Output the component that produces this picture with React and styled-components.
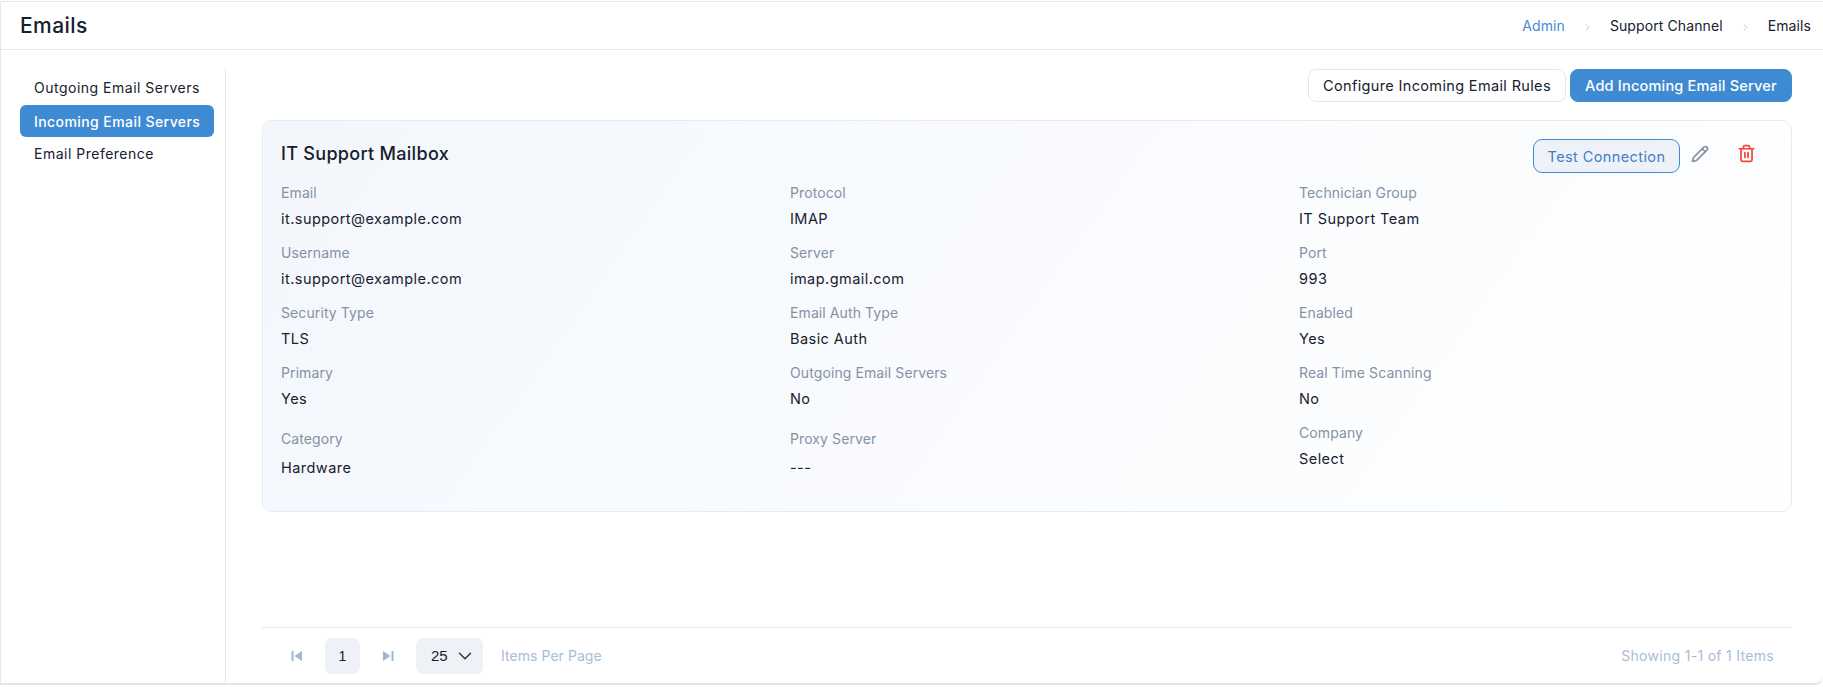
import React from 'react';
import styled, { createGlobalStyle } from 'styled-components';
import { ChevronDown, ChevronRight, Pencil, Trash2 } from 'lucide-react';

const GlobalStyle = createGlobalStyle`
	html, body {
		margin: 0;
		padding: 0;
		background: #fff;
		font-family: Inter, 'Liberation Sans', sans-serif;
		color: #16202e;
	}
	* {
		box-sizing: border-box;
	}
`;

const fields = [
	{ label: 'Email', value: 'it.support@example.com' },
	{ label: 'Protocol', value: 'IMAP' },
	{ label: 'Technician Group', value: 'IT Support Team' },
	{ label: 'Username', value: 'it.support@example.com' },
	{ label: 'Server', value: 'imap.gmail.com' },
	{ label: 'Port', value: '993' },
	{ label: 'Security Type', value: 'TLS' },
	{ label: 'Email Auth Type', value: 'Basic Auth' },
	{ label: 'Enabled', value: 'Yes' },
	{ label: 'Primary', value: 'Yes' },
	{ label: 'Outgoing Email Servers', value: 'No' },
	{ label: 'Real Time Scanning', value: 'No' },
];

const SkipIcon = ({ flip }) => (
	<SkipSvg viewBox="0 0 12 12" $flip={flip}>
		<rect x="0.5" y="1" width="2" height="10" />
		<path d="M11 1v10L3.5 6z" />
	</SkipSvg>
);

const App = () => (
	<>
		<GlobalStyle />
		<Shell>
			<Header>
				<PageTitle>Emails</PageTitle>
				<Breadcrumb>
					<Crumb $link>Admin</Crumb>
					<CrumbArrow>
						<ChevronRight size={11} strokeWidth={1.6} color="#a9b8cc" />
					</CrumbArrow>
					<Crumb>Support Channel</Crumb>
					<CrumbArrow>
						<ChevronRight size={11} strokeWidth={1.6} color="#a9b8cc" />
					</CrumbArrow>
					<Crumb>Emails</Crumb>
				</Breadcrumb>
			</Header>
			<Body>
				<Sidebar>
					<NavItem>Outgoing Email Servers</NavItem>
					<NavItem $active>Incoming Email Servers</NavItem>
					<NavItem>Email Preference</NavItem>
				</Sidebar>
				<Main>
					<Toolbar>
						<OutlineButton>Configure Incoming Email Rules</OutlineButton>
						<PrimaryButton>Add Incoming Email Server</PrimaryButton>
					</Toolbar>
					<Card>
						<CardHead>
							<CardTitle>IT Support Mailbox</CardTitle>
							<CardActions>
								<TestButton>Test Connection</TestButton>
								<IconButton>
									<Pencil size={18} strokeWidth={2.3} color="#8293a8" />
								</IconButton>
								<IconButton $wide>
									<Trash2 size={19} strokeWidth={2.2} color="#f4483c" />
								</IconButton>
							</CardActions>
						</CardHead>
						<FieldGrid>
							{fields.map((f) => (
								<Field key={f.label}>
									<FieldLabel>{f.label}</FieldLabel>
									<FieldValue>{f.value}</FieldValue>
								</Field>
							))}
							<Field $lowered>
								<FieldLabel>Category</FieldLabel>
								<FieldValue $spaced>Hardware</FieldValue>
							</Field>
							<Field $lowered>
								<FieldLabel>Proxy Server</FieldLabel>
								<FieldValue $spaced>---</FieldValue>
							</Field>
							<Field>
								<FieldLabel>Company</FieldLabel>
								<FieldValue>Select</FieldValue>
							</Field>
						</FieldGrid>
					</Card>
					<Footer>
						<Pager>
							<PagerArrow>
								<SkipIcon />
							</PagerArrow>
							<PageBox>1</PageBox>
							<PagerArrow>
								<SkipIcon flip />
							</PagerArrow>
							<SizeSelect>
								25
								<ChevronDown size={22} strokeWidth={1.6} color="#2b3546" />
							</SizeSelect>
							<MutedText>Items Per Page</MutedText>
						</Pager>
						<Summary>Showing 1-1 of 1 Items</Summary>
					</Footer>
				</Main>
			</Body>
		</Shell>
	</>
);

const Shell = styled.div`
	height: 684px;
	margin-top: 1px;
	display: flex;
	flex-direction: column;
	background: #fff;
	border-top: 1px solid #e3e6ec;
	border-left: 1px solid #e3e6ec;
	border-bottom: 2px solid #e3e6ec;
	border-bottom-right-radius: 8px;
`;

const Header = styled.header`
	height: 48px;
	flex: none;
	display: flex;
	align-items: center;
	justify-content: space-between;
	padding: 0 12px 0 19px;
	border-bottom: 1px solid #e3e6ec;
`;

const PageTitle = styled.h1`
	margin: 0;
	font-size: 21px;
	font-weight: 500;
	letter-spacing: 0.45px;
	color: #16202e;
`;

const Breadcrumb = styled.nav`
	display: flex;
	align-items: center;
	gap: 17px;
`;

const Crumb = styled.span`
	font-size: 14px;
	letter-spacing: 0.1px;
	color: ${(props) => (props.$link ? '#4a8bd6' : '#16202e')};
`;

const CrumbArrow = styled.span`
	display: flex;
	padding-top: 3px;
`;

const Body = styled.div`
	flex: 1;
	min-height: 0;
	display: flex;
	padding: 19px 31px 0 19px;
`;

const Sidebar = styled.aside`
	width: 206px;
	flex: none;
	display: flex;
	flex-direction: column;
	padding-top: 2px;
	padding-right: 11px;
	border-right: 1px solid #e3e6ec;
`;

const NavItem = styled.div`
	height: 32px;
	margin-top: ${(props) => (props.$active ? '2px' : '0')};
	display: flex;
	align-items: center;
	padding: 0 13px 0 14px;
	border-radius: 6px;
	white-space: nowrap;
	font-size: 14px;
	letter-spacing: ${(props) => (props.$active ? '0.42px' : '0.5px')};
	font-weight: ${(props) => (props.$active ? 500 : 400)};
	color: ${(props) => (props.$active ? '#fff' : '#16202e')};
	background: ${(props) => (props.$active ? '#3f8bd3' : 'transparent')};
`;

const Main = styled.main`
	flex: 1;
	min-width: 0;
	display: flex;
	flex-direction: column;
	padding-left: 36px;
`;

const Toolbar = styled.div`
	display: flex;
	justify-content: flex-end;
	gap: 4px;
`;

const OutlineButton = styled.button`
	height: 33px;
	width: 258px;
	padding: 0;
	font: 400 14.5px Inter, sans-serif;
	letter-spacing: 0.35px;
	color: #16202e;
	background: #fff;
	border: 1px solid #e1e6ee;
	border-radius: 8px;
`;

const PrimaryButton = styled(OutlineButton)`
	width: 222px;
	font-weight: 500;
	letter-spacing: 0.2px;
	color: #fff;
	background: #3f8bd3;
	border-color: #3f8bd3;
`;

const Card = styled.section`
	margin-top: 18px;
	height: 392px;
	padding: 18px 18px;
	background: linear-gradient(125deg, #f3f7fc 0%, #f9fbfe 50%, #fff 100%);
	border: 1px solid #e3ecf5;
	border-radius: 10px;
`;

const CardHead = styled.div`
	display: flex;
	align-items: center;
	justify-content: space-between;
	height: 34px;
`;

const CardTitle = styled.h2`
	margin: 0 0 5px;
	font-size: 18px;
	font-weight: 500;
	letter-spacing: 0.3px;
	color: #16202e;
`;

const CardActions = styled.div`
	display: flex;
	align-items: center;
	padding-right: 1px;
`;

const TestButton = styled.button`
	height: 34px;
	width: 147px;
	padding: 0;
	font: 400 14.5px Inter, sans-serif;
	letter-spacing: 0.4px;
	color: #3f7fc4;
	background: #eef2f8;
	border: 1px solid #3f8bd3;
	border-radius: 9px;
`;

const IconButton = styled.span`
	display: flex;
	justify-content: center;
	width: ${(props) => (props.$wide ? '52px' : '40px')};
	margin-top: -5px;
`;

const FieldGrid = styled.div`
	display: grid;
	grid-template-columns: 509px 509px 1fr;
	row-gap: 13px;
	margin-top: 10px;
`;

const Field = styled.div`
	display: flex;
	flex-direction: column;
	gap: 5px;
	margin-top: ${(props) => (props.$lowered ? '6px' : '0')};
`;

const FieldLabel = styled.span`
	font-size: 14px;
	line-height: 20px;
	letter-spacing: 0.1px;
	color: #8492a6;
`;

const FieldValue = styled.span`
	font-size: 14.5px;
	line-height: 22px;
	letter-spacing: 0.45px;
	color: #16202e;
	margin-top: ${(props) => (props.$spaced ? '3px' : '0')};
`;

const Footer = styled.footer`
	margin-top: auto;
	height: 56px;
	flex: none;
	display: flex;
	align-items: center;
	justify-content: space-between;
	padding: 0 18px 0 29px;
	border-top: 1px solid #e3e6ec;
`;

const Pager = styled.div`
	display: flex;
	align-items: center;
`;

const PagerArrow = styled.span`
	display: flex;
	width: 12px;
`;

const SkipSvg = styled.svg`
	width: 12px;
	height: 12px;
	fill: #a3b6cf;
	transform: ${(props) => (props.$flip ? 'scaleX(-1)' : 'none')};
`;

const PageBox = styled.span`
	width: 35px;
	height: 36px;
	margin: 0 22px 0 22px;
	display: flex;
	align-items: center;
	justify-content: center;
	font: 14px 'Liberation Sans', sans-serif;
	color: #16202e;
	background: #eef1f6;
	border-radius: 7px;
`;

const SizeSelect = styled.div`
	width: 67px;
	height: 36px;
	margin: 0 18px 0 22px;
	display: flex;
	align-items: center;
	justify-content: space-between;
	padding: 0 7px 0 15px;
	font: 15px 'Liberation Sans', sans-serif;
	color: #16202e;
	background: #eef1f6;
	border-radius: 7px;
`;

const MutedText = styled.span`
	font-size: 14px;
	letter-spacing: 0.05px;
	color: #a9bcd6;
`;

const Summary = styled(MutedText)`
	letter-spacing: 0.3px;
`;

export default App;
